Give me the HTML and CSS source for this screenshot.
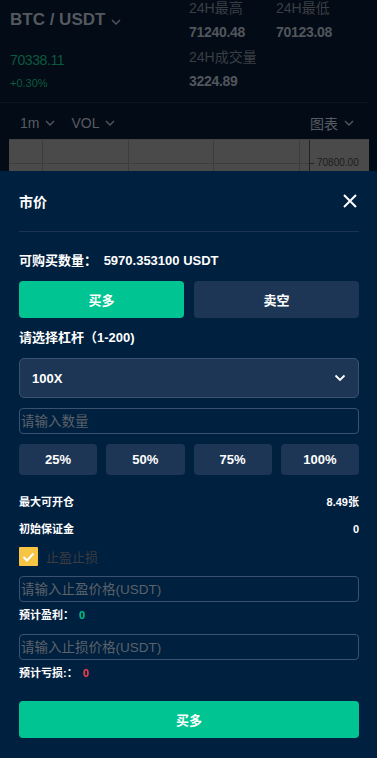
FILE: index.html
```html
<!doctype html>
<html>
<head>
<meta charset="UTF-8">
<title>BTC / USDT - 市价</title>
<link rel="stylesheet" href="styles.css">
</head>
<body>
<div class="page">
  <div class="ticker">
    <div class="ticker_left">
      <div class="pair">BTC / USDT
        <svg class="chev_small" width="10" height="6" viewBox="0 0 10 6"><path d="M1 1l4 4 4-4" fill="none" stroke="#55595f" stroke-width="1.4"/></svg>
      </div>
      <div class="last_price">70338.11</div>
      <div class="change">+0.30%</div>
    </div>
    <div class="stat">
      <div class="stat_label">24H最高</div>
      <div class="stat_value">71240.48</div>
      <div class="stat_label second">24H成交量</div>
      <div class="stat_value">3224.89</div>
    </div>
    <div class="stat">
      <div class="stat_label">24H最低</div>
      <div class="stat_value">70123.08</div>
    </div>
  </div>
  <div class="tabs">
    <div class="tab">1m <svg width="10" height="6" viewBox="0 0 10 6"><path d="M1 1l4 4 4-4" fill="none" stroke="#55595f" stroke-width="1.3"/></svg></div>
    <div class="tab">VOL <svg width="10" height="6" viewBox="0 0 10 6"><path d="M1 1l4 4 4-4" fill="none" stroke="#55595f" stroke-width="1.3"/></svg></div>
    <div class="tab tab_right">图表 <svg width="10" height="6" viewBox="0 0 10 6"><path d="M1 1l4 4 4-4" fill="none" stroke="#55595f" stroke-width="1.3"/></svg></div>
  </div>
  <div class="chart">
    <div class="col c1"></div>
    <div class="col c2"></div>
    <div class="col c3"></div>
    <div class="col c4"></div>
    <div class="col c5"></div>
    <div class="axis"><span class="tick"></span>70800.00</div>
  </div>
</div>

<div class="sheet">
  <div class="sheet_head">
    <div class="sheet_title">市价</div>
    <svg class="close" width="14" height="14" viewBox="0 0 14 14"><path d="M1 1l12 12M13 1L1 13" stroke="#fff" stroke-width="2"/></svg>
  </div>
  <div class="amount">可购买数量： <span class="amount_num">5970.353100 USDT</span></div>
  <div class="side_btns">
    <div class="btn btn_long">买多</div>
    <div class="btn btn_short">卖空</div>
  </div>
  <div class="lev_label">请选择杠杆（1-200)</div>
  <div class="select">
    <span>100X</span>
    <svg width="12" height="8" viewBox="0 0 12 8"><path d="M1.5 1.5l4.5 4.5 4.5-4.5" fill="none" stroke="#fff" stroke-width="1.8"/></svg>
  </div>
  <input class="field" type="text" placeholder="请输入数量">
  <div class="pct_row">
    <div class="pct">25%</div>
    <div class="pct">50%</div>
    <div class="pct">75%</div>
    <div class="pct">100%</div>
  </div>
  <div class="info_row first"><span>最大可开仓</span><span>8.49张</span></div>
  <div class="info_row"><span>初始保证金</span><span>0</span></div>
  <label class="check_row">
    <span class="check"><svg width="13" height="10" viewBox="0 0 13 10"><path d="M1.5 5l3.5 3.5L11.5 1.5" fill="none" stroke="#fff" stroke-width="2"/></svg></span>
    <span class="check_text">止盈止损</span>
  </label>
  <input class="field tp" type="text" placeholder="请输入止盈价格(USDT)">
  <div class="est">预计盈利： <span class="green">0</span></div>
  <input class="field sl" type="text" placeholder="请输入止损价格(USDT)">
  <div class="est">预计亏损:： <span class="red">0</span></div>
  <div class="btn btn_long submit">买多</div>
</div>
</body>
</html>
```

FILE: styles.css
```css
body {
    margin: 0;
    width: 377px;
    height: 758px;
    overflow: hidden;
    background: #020b16;
    font-family: "Liberation Sans", "Noto Sans CJK SC", sans-serif;
}
.page {
    height: 171px;
    overflow: hidden;
}
.ticker {
    display: grid;
    grid-template-columns: 179px 87px 1fr;
    padding-left: 10px;
    height: 102px;
    border-bottom: 1px solid #0c1620;
    margin: 0 8px 0 0;
}
.pair {
    font-size: 17px;
    font-weight: bold;
    color: #55595f;
    line-height: 20px;
    margin-top: 10px;
    display: flex;
    align-items: center;
}
.chev_small {
    margin-left: 6px;
    margin-top: 3px;
}
.last_price {
    color: #0d5a3e;
    font-size: 14px;
    letter-spacing: -0.4px;
    line-height: 20px;
    margin-top: 20px;
}
.change {
    color: #0d5a3e;
    font-size: 11px;
    line-height: 14px;
    margin-top: 6px;
}
.stat_label {
    color: #3b3f45;
    font-size: 14px;
    line-height: 17px;
}
.stat_label.second {
    margin-top: 8px;
}
.stat_value {
    color: #52565c;
    font-size: 14px;
    font-weight: bold;
    letter-spacing: -0.3px;
    line-height: 17px;
    margin-top: 7px;
}
.tabs {
    display: flex;
    align-items: center;
    box-sizing: border-box;
    height: 36px;
    padding: 4px 23px 0 20px;
}
.tab {
    color: #585c62;
    font-size: 14px;
    margin-right: 16px;
    display: flex;
    align-items: center;
    gap: 6px;
}
.tab_right {
    margin-left: auto;
    margin-right: 0;
}
.chart {
    margin: 0 8px 0 9px;
    height: 80px;
    background: #4a4a4a;
    display: flex;
    border-top: 1px solid #444;
}
.col {
    height: 100%;
    border-right: 1px solid #3d3d3d;
    background: linear-gradient(#4a4a4a 23px, #3d3d3d 23px, #3d3d3d 24px, #4a4a4a 24px);
}
.c1 { width: 33px; }
.c2 { width: 85px; }
.c3 { width: 84px; }
.c4 { width: 85px; }
.c5 { width: 9px; border-right: 1px solid #222; }
.axis {
    flex: 1;
    font-size: 10px;
    color: #1c1c1c;
    padding-top: 17px;
    display: flex;
    align-items: flex-start;
}
.tick {
    width: 4px;
    height: 1px;
    background: #222;
    margin: 6px 3px 0 0;
}

.sheet {
    background: #00203f;
    height: 587px;
    padding: 0 18px 0 19px;
    color: #fff;
}
.sheet_head {
    height: 60px;
    display: flex;
    align-items: center;
    justify-content: space-between;
    border-bottom: 1px solid #1b3453;
    padding-right: 2px;
}
.sheet_title {
    font-size: 14px;
    font-weight: bold;
}
.amount {
    font-size: 13px;
    font-weight: bold;
    line-height: 20px;
    margin-top: 19px;
}
.amount_num {
    margin-left: 3px;
}
.side_btns {
    display: flex;
    gap: 10px;
    margin-top: 10px;
}
.btn {
    flex: 1;
    height: 37px;
    border-radius: 4px;
    display: flex;
    align-items: center;
    justify-content: center;
    font-size: 13px;
    font-weight: bold;
}
.btn_long {
    background: #00c491;
}
.btn_short {
    background: #1e3655;
}
.lev_label {
    font-size: 13px;
    font-weight: bold;
    line-height: 20px;
    margin-top: 10px;
}
.select {
    margin-top: 10px;
    height: 38px;
    border: 1px solid #3a5270;
    border-radius: 5px;
    background: #1e3655;
    display: flex;
    align-items: center;
    justify-content: space-between;
    padding: 0 12px;
    font-size: 13px;
    font-weight: bold;
}
.field {
    display: block;
    box-sizing: border-box;
    width: 100%;
    height: 26px;
    margin-top: 10px;
    background: transparent;
    border: 1px solid #3a5270;
    border-radius: 4px;
    padding: 0 0 0 1px;
    font-family: "Liberation Sans", "Noto Sans CJK SC", sans-serif;
    font-size: 13.5px;
    color: #fff;
    outline: none;
}
.field::placeholder {
    color: #5c6269;
}
.pct_row {
    display: grid;
    grid-template-columns: repeat(4, 1fr);
    gap: 9px;
    margin-top: 10px;
}
.pct {
    height: 31px;
    border-radius: 4px;
    background: #1e3655;
    display: flex;
    align-items: center;
    justify-content: center;
    font-size: 13px;
    font-weight: bold;
}
.info_row {
    display: flex;
    justify-content: space-between;
    font-size: 11px;
    font-weight: bold;
    line-height: 20px;
    margin-top: 7px;
}
.info_row.first {
    margin-top: 17px;
}
.check_row {
    display: flex;
    align-items: center;
    margin-top: 8px;
    height: 19px;
}
.check {
    width: 19px;
    height: 19px;
    background: #f7c544;
    border-radius: 1px;
    display: flex;
    align-items: center;
    justify-content: center;
}
.check_text {
    color: #3a3c3f;
    font-size: 13px;
    margin-left: 8px;
}
.tp {
    margin-top: 10px;
}
.est {
    font-size: 11px;
    font-weight: bold;
    line-height: 20px;
    margin-top: 3px;
}
.sl {
    margin-top: 9px;
}
.green {
    color: #00c38e;
    margin-left: 2px;
}
.red {
    color: #f04352;
    margin-left: 2px;
}
.submit {
    margin-top: 18px;
}
```
